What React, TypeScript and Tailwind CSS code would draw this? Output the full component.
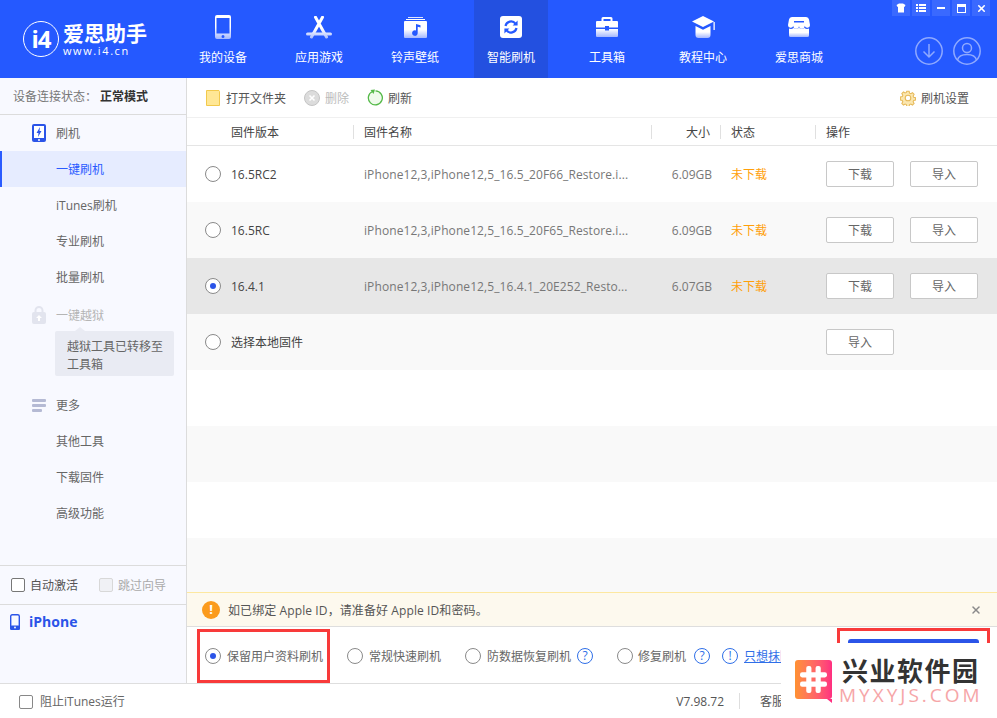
import React from 'react';
import { X } from 'lucide-react';

const FONT = 'font-["Open_Sans","Noto_Sans_CJK_SC",sans-serif]';

function Grad({ id }: { id: string }) {
  return (
    <defs>
      <linearGradient id={id} x1="0" y1="0" x2="0" y2="1">
        <stop offset="0%" stopColor="#ffffff" />
        <stop offset="50%" stopColor="#ffffff" />
        <stop offset="100%" stopColor="#a4b8ff" />
      </linearGradient>
    </defs>
  );
}

const PhoneIcon = () => (
  <svg width="16" height="24" viewBox="0 0 16 24">
    <Grad id="g-phone" />
    <path fillRule="evenodd" fill="url(#g-phone)" d="M2 0h12a2 2 0 0 1 2 2v20a2 2 0 0 1-2 2H2a2 2 0 0 1-2-2V2a2 2 0 0 1 2-2zM1.500 3v15.500h13V3zM8 20a1.500 1.500 0 1 0 0 3 1.500 1.500 0 0 0 0-3z" />
  </svg>
);

const AppIcon = () => (
  <svg width="26" height="23" viewBox="0 0 26 23">
    <defs>
      <linearGradient id="g-app" gradientUnits="userSpaceOnUse" x1="0" y1="0" x2="0" y2="23">
        <stop offset="0%" stopColor="#ffffff" />
        <stop offset="55%" stopColor="#ffffff" />
        <stop offset="100%" stopColor="#a4b8ff" />
      </linearGradient>
    </defs>
    <path d="M9.500 1.200L20.500 21M16.500 1.200L5.500 21" fill="none" stroke="url(#g-app)" strokeWidth="3" strokeLinecap="round" />
    <rect x="0" y="16.500" width="26" height="3" rx="1.500" fill="url(#g-app)" />
  </svg>
);

const MusicIcon = () => (
  <svg width="23" height="21" viewBox="0 0 23 21">
    <Grad id="g-music" />
    <rect x="4" y="0" width="15" height="1" fill="#dfe6ff" />
    <rect x="2" y="2" width="19" height="1" fill="#ffffff" />
    <path fill="url(#g-music)" fillRule="evenodd" d="M1 4h21a1 1 0 0 1 1 1v15a1 1 0 0 1-1 1H1a1 1 0 0 1-1-1V5a1 1 0 0 1 1-1zM12 7v6.500a2.800 2.800 0 1 0 1.700 2.500V9.800l2.800.7V8.200z" />
  </svg>
);

const FlashIcon = () => (
  <svg width="22" height="22" viewBox="0 0 22 22">
    <rect width="22" height="22" rx="3" fill="#ffffff" />
    <path d="M5.500 10a5.700 5.700 0 0 1 10-2.400M16.500 12a5.700 5.700 0 0 1-10 2.400" fill="none" stroke="#2559ff" strokeWidth="2.200" />
    <path d="M17.600 4.600v5h-5zM4.400 17.400v-5h5z" fill="#2559ff" />
  </svg>
);

const ToolboxIcon = () => (
  <svg width="22" height="20" viewBox="0 0 22 20">
    <Grad id="g-tool" />
    <path fill="#ffffff" d="M7 0h8a1.500 1.500 0 0 1 1.500 1.500V4h-2V2h-7v2h-2V1.500A1.500 1.500 0 0 1 7 0z" />
    <path fill="url(#g-tool)" d="M1 4h20a1 1 0 0 1 1 1v5.500h-9V9H9v1.500H0V5a1 1 0 0 1 1-1zM0 12h9v1.500h4V12h9v7a1 1 0 0 1-1 1H1a1 1 0 0 1-1-1z" />
  </svg>
);

const CapIcon = () => (
  <svg width="23" height="22" viewBox="0 0 23 22">
    <Grad id="g-cap" />
    <path fill="#ffffff" d="M11 0L0 5.500 11 11l11-5.500z" />
    <path fill="url(#g-cap)" d="M3.500 10L11 13.800 18.500 10v9a3 3 0 0 1-3 3h-9a3 3 0 0 1-3-3z" />
    <rect x="21.400" y="6" width="1.500" height="8" fill="#dfe6ff" />
  </svg>
);

const StoreIcon = () => (
  <svg width="22" height="20" viewBox="0 0 22 20">
    <Grad id="g-store" />
    <path fill="#ffffff" fillRule="evenodd" d="M4 0h14a3 3 0 0 1 3 2.500L22 8a2.700 2.700 0 0 1-5.300.8 2.800 2.800 0 0 1-5.700 0 2.800 2.800 0 0 1-5.700 0A2.700 2.700 0 0 1 0 8l1-5.500A3 3 0 0 1 4 0zM6 4v1.500h10V4z" />
    <path fill="url(#g-store)" d="M1 11.500c1.700.7 3.200.5 4.500-.5 1.500 1.100 3.500 1.100 5.500 0 2 1.100 4 1.100 5.500 0 1.300 1 2.800 1.200 4.500.5V18.500a1.500 1.500 0 0 1-1.500 1.500h-17A1.500 1.500 0 0 1 1 18.500z" />
  </svg>
);

const navItems = [
  { label: '我的设备', icon: <PhoneIcon /> },
  { label: '应用游戏', icon: <AppIcon /> },
  { label: '铃声壁纸', icon: <MusicIcon /> },
  { label: '智能刷机', icon: <FlashIcon />, active: true },
  { label: '工具箱', icon: <ToolboxIcon /> },
  { label: '教程中心', icon: <CapIcon /> },
  { label: '爱思商城', icon: <StoreIcon /> },
];

function WindowControls() {
  return (
    <div className="absolute right-[7px] top-0 flex gap-[2px]">
      <div className="flex h-[16px] w-[18px] items-center justify-center bg-[#3a69ff]">
        <svg width="10" height="10" viewBox="0 0 10 10"><path fill="#fff" d="M3 .5h4L9.500 2 8.500 4 8 3.800V9.500H2V3.800L1.500 4 .5 2z" /></svg>
      </div>
      <div className="flex h-[16px] w-[18px] items-center justify-center bg-[#3a69ff]">
        <svg width="10" height="10" viewBox="0 0 10 10"><path fill="#fff" d="M0 1h2v2H0zM3 1h7v2H3zM0 4h2v2H0zM3 4h7v2H3zM0 7h2v2H0zM3 7h7v2H3z" /></svg>
      </div>
      <div className="flex h-[16px] w-[18px] items-center justify-center bg-[#3a69ff]">
        <div className="h-[2px] w-[8px] bg-white" />
      </div>
      <div className="flex h-[16px] w-[18px] items-center justify-center bg-[#3a69ff]">
        <div className="h-[9px] w-[9px] border border-t-[3px] border-white" />
      </div>
      <div className="flex h-[16px] w-[18px] items-center justify-center bg-[#3a69ff]">
        <X size={11} color="#fff" strokeWidth={3.5} />
      </div>
    </div>
  );
}

function Header() {
  return (
    <div className="relative flex h-[78px] shrink-0 bg-[#2559ff] text-white">
      <div className="flex w-[175px] shrink-0 items-center pl-[23px]">
        <div className="flex h-[36px] w-[36px] items-center justify-center rounded-full border-[1.5px] border-white">
          <span className="text-[24px] leading-none font-bold tracking-[-1px]">i4</span>
        </div>
        <div className="ml-[4px] flex flex-col">
          <span className="text-[21px] leading-[24px] font-bold">爱思助手</span>
          <span className="text-[11px] leading-[12px] tracking-[1.600px]">www.i4.cn</span>
        </div>
      </div>
      {navItems.map((n) => (
        <div key={n.label} className="flex w-[96px] shrink-0 justify-center">
          <div className={`flex h-[78px] w-[74px] flex-col items-center ${n.active ? 'bg-[#2350e0]' : ''}`}>
            <div className="mt-[14px] flex h-[26px] items-center justify-center">{n.icon}</div>
            <span className="mt-[9px] text-[12px] leading-[18px]">{n.label}</span>
          </div>
        </div>
      ))}
      <div className="ml-auto mr-[16px] mt-[37px] flex h-[28px] gap-[10px]">
        <svg width="28" height="28" viewBox="0 0 28 28" fill="none" stroke="#8fa9ff" strokeWidth="1.500">
          <circle cx="14" cy="14" r="13.200" />
          <path d="M14 7v13M8.500 14.500L14 20l5.500-5.500" />
        </svg>
        <svg width="28" height="28" viewBox="0 0 28 28" fill="none" stroke="#8fa9ff" strokeWidth="1.500">
          <circle cx="14" cy="14" r="13.200" />
          <circle cx="14" cy="11" r="4.500" />
          <path d="M4.500 23c1-4 5-5.500 9.500-5.500s8.500 1.500 9.500 5.500" />
        </svg>
      </div>
      <WindowControls />
    </div>
  );
}

function SideItem({ label, active }: { label: string; active?: boolean }) {
  return (
    <div className={`flex h-[36px] items-center pt-[2px] text-[12px] ${active ? 'border-l-2 border-[#2a5bff] bg-[#e6ecff] pl-[54px] text-[#2a5bff]' : 'pl-[56px] text-[#666666]'}`}>
      {label}
    </div>
  );
}

function SideHead({ label, icon, muted }: { label: string; icon: React.ReactNode; muted?: boolean }) {
  return (
    <div className={`flex h-[36px] items-center text-[12px] ${muted ? 'text-[#b5b5b5]' : 'text-[#666666]'}`}>
      <div className="flex w-[56px] pl-[32px]">{icon}</div>
      <span className="pt-[2px]">{label}</span>
    </div>
  );
}

function Sidebar() {
  return (
    <div className="flex w-[187px] shrink-0 flex-col border-r border-[#dcdcdc] bg-[#f8f9ff]">
      <div className="flex h-[37px] shrink-0 items-center border-b border-[#dcdcdc] pl-[13px] pt-[2px] text-[12px] text-[#777777]">
        {'设备连接状态\uFF1A'}
        <span className="ml-[3px] font-bold text-[#333333]">正常模式</span>
      </div>
      <SideHead
        label="刷机"
        icon={
          <svg width="14" height="18" viewBox="0 0 14 18">
            <rect width="14" height="18" rx="2" fill="#2b54e8" />
            <rect x="2" y="2" width="10" height="12" fill="#ffffff" />
            <path d="M8 3L4.500 9h2L6 13l3.500-6h-2z" fill="#2b54e8" />
            <circle cx="7" cy="16" r="1" fill="#ffffff" />
          </svg>
        }
      />
      <SideItem label="一键刷机" active />
      <SideItem label="iTunes刷机" />
      <SideItem label="专业刷机" />
      <SideItem label="批量刷机" />
      <div className="mt-[2px]">
        <SideHead
          muted
          label="一键越狱"
          icon={
            <svg width="14" height="18" viewBox="0 0 14 18">
              <path d="M3.500 7V4.500a3.500 3.500 0 0 1 7 0V7" fill="none" stroke="#e2e4ee" strokeWidth="2" />
              <rect y="6" width="14" height="12" rx="2" fill="#e2e4ee" />
              <path d="M7 9l3 3H8v3H6v-3H4z" fill="#ffffff" />
            </svg>
          }
        />
      </div>
      <div className="relative -mt-[2px] ml-[55px] h-[45px] w-[119px] rounded-[2px] bg-[#e9ebf3] pl-[12px] pr-[8px] pt-[7px] text-[12px] leading-[18px] text-[#666666]">
        <div className="absolute -top-[4px] left-[20px] h-0 w-0 border-x-[5px] border-b-[4px] border-x-transparent border-b-[#e9ebf3]" />
        越狱工具已转移至工具箱
      </div>
      <div className="mt-[11px]">
        <SideHead
          label="更多"
          icon={
            <svg width="14" height="13" viewBox="0 0 14 13" fill="#b5bad4">
              <rect width="14" height="3" rx="1" />
              <rect y="5" width="14" height="3" rx="1" />
              <rect y="10" width="10" height="3" rx="1" />
            </svg>
          }
        />
      </div>
      <SideItem label="其他工具" />
      <SideItem label="下载固件" />
      <SideItem label="高级功能" />
      <div className="flex-1" />
      <div className="flex h-[40px] shrink-0 items-center border-y border-[#dcdcdc] pl-[11px] text-[12px]">
        <div className="h-[14px] w-[14px] rounded-[2px] border border-[#777777] bg-white" />
        <span className="ml-[5px] pt-[2px] text-[#555555]">自动激活</span>
        <div className="ml-[21px] h-[14px] w-[14px] rounded-[2px] border border-[#d8d8d8] bg-[#f0f1f5]" />
        <span className="ml-[5px] pt-[2px] text-[#aaaaaa]">跳过向导</span>
      </div>
      <div className="flex h-[78px] shrink-0 items-start pl-[10px] pt-[8px]">
        <svg width="10" height="16" viewBox="0 0 10 16" className="mt-[1px]">
          <rect x="0.700" y="0.700" width="8.600" height="14.600" rx="1.500" fill="none" stroke="#2b54e8" strokeWidth="1.400" />
          <rect y="11.500" width="10" height="4.500" rx="1.500" fill="#2b54e8" />
          <circle cx="5" cy="13.500" r="0.900" fill="#ffffff" />
        </svg>
        <span className="ml-[9px] text-[14px] leading-[18px] font-bold text-[#2b54e8]">iPhone</span>
      </div>
    </div>
  );
}

const firmwares = [
  { version: '16.5RC2', name: 'iPhone12,3,iPhone12,5_16.5_20F66_Restore.i...', size: '6.09GB', bg: 'bg-white' },
  { version: '16.5RC', name: 'iPhone12,3,iPhone12,5_16.5_20F65_Restore.i...', size: '6.09GB', bg: 'bg-[#f9f9f9]' },
  { version: '16.4.1', name: 'iPhone12,3,iPhone12,5_16.4.1_20E252_Resto...', size: '6.07GB', bg: 'bg-[#e7e7e7]', checked: true },
];

function Radio({ checked }: { checked?: boolean }) {
  return (
    <div className="flex h-[16px] w-[16px] shrink-0 items-center justify-center rounded-full border border-[#8a8a8a] bg-white">
      {checked && <div className="h-[6px] w-[6px] rounded-full bg-[#2b54e8]" />}
    </div>
  );
}

function OutlineBtn({ label }: { label: string }) {
  return (
    <div className="flex h-[26px] w-[68px] items-center justify-center rounded-[2px] border border-[#c8c8c8] bg-white pt-[2px] text-[12px] text-[#666666]">
      {label}
    </div>
  );
}

function HeadCell({ className, label }: { className: string; label: string }) {
  return <div className={`pt-[2px] text-[12px] text-[#444444] ${className}`}>{label}</div>;
}

function Toolbar() {
  return (
    <div className="flex h-[40px] shrink-0 items-center border-b border-[#f0f0f0] text-[12px] text-[#555555]">
      <svg width="14" height="16" viewBox="0 0 14 16" className="ml-[19px]">
        <path d="M.5.5h12.500l.500 1v14H.5z" fill="#ffe795" stroke="#f2c94c" />
      </svg>
      <span className="ml-[6px] pt-[2px]">打开文件夹</span>
      <svg width="16" height="16" viewBox="0 0 16 16" className="ml-[18px]">
        <circle cx="8" cy="8" r="7.500" fill="#dcdcdc" stroke="#c4c4c4" />
        <path d="M5.500 5.500l5 5M10.500 5.500l-5 5" stroke="#ffffff" strokeWidth="1.600" />
      </svg>
      <span className="ml-[5px] pt-[2px] text-[#bbbbbb]">删除</span>
      <svg width="17" height="17" viewBox="0 0 17 17" className="ml-[18px]">
        <path d="M5.500 2.500a7 7 0 1 0 3-.6" fill="#effbec" stroke="#54b948" strokeWidth="1.300" />
        <path d="M3.500 1L8 .5 6.500 5z" fill="#54b948" />
      </svg>
      <span className="ml-[4px] pt-[2px]">刷新</span>
      <div className="ml-auto mr-[28px] flex items-center">
        <svg width="16" height="16" viewBox="0 0 16 16" fill="#fbe7b0" stroke="#e6b95a" strokeWidth="1.100">
          <path d="M6.700 .8h2.600l.4 2 1.400.6 1.800-1.100 1.800 1.800-1.100 1.800.6 1.400 2 .4v2.600l-2 .4-.6 1.400 1.100 1.800-1.800 1.800-1.800-1.100-1.400.6-.4 2H6.700l-.4-2-1.400-.6-1.800 1.100-1.800-1.800 1.100-1.800-.6-1.400-2-.4V6.900l2-.4.6-1.400L1.300 3.300l1.800-1.800 1.800 1.100 1.400-.6z" transform="translate(.6 .6) scale(.92)" />
          <circle cx="8" cy="8" r="2.800" fill="#ffffff" />
        </svg>
        <span className="ml-[5px] pt-[2px]">刷机设置</span>
      </div>
    </div>
  );
}

function Table() {
  return (
    <div className="flex flex-1 flex-col">
      <div className="flex h-[28px] shrink-0 items-center border-b border-[#e5e5e5]">
        <HeadCell className="w-[166px] pl-[44px]" label="固件版本" />
        <div className="h-[14px] w-px bg-[#e0e0e0]" />
        <HeadCell className="w-[297px] pl-[10px]" label="固件名称" />
        <div className="h-[14px] w-px bg-[#e0e0e0]" />
        <HeadCell className="w-[68px] pr-[10px] text-right" label="大小" />
        <div className="h-[14px] w-px bg-[#e0e0e0]" />
        <HeadCell className="w-[94px] pl-[10px]" label="状态" />
        <div className="h-[14px] w-px bg-[#e0e0e0]" />
        <HeadCell className="pl-[10px]" label="操作" />
      </div>
      {firmwares.map((f) => (
        <div key={f.version} className={`flex h-[56px] shrink-0 items-center text-[12px] ${f.bg}`}>
          <div className="flex w-[44px] justify-end pr-[10px]"><Radio checked={f.checked} /></div>
          <div className="w-[133px] pt-[2px] text-[#444444]">{f.version}</div>
          <div className="w-[275px] whitespace-nowrap pt-[2px] tracking-[0.09px] text-[#777777]">{f.name}</div>
          <div className="w-[73px] pt-[2px] text-right text-[#777777]">{f.size}</div>
          <div className="ml-[19px] w-[95px] pt-[2px] text-[#ff9f0a]">未下载</div>
          <OutlineBtn label="下载" />
          <div className="ml-[16px]"><OutlineBtn label="导入" /></div>
        </div>
      ))}
      <div className="flex h-[56px] shrink-0 items-center bg-[#f9f9f9] text-[12px]">
        <div className="flex w-[44px] justify-end pr-[10px]"><Radio /></div>
        <div className="w-[595px] pt-[2px] text-[#444444]">选择本地固件</div>
        <OutlineBtn label="导入" />
      </div>
      <div className="h-[56px] shrink-0" />
      <div className="h-[56px] shrink-0 bg-[#f9f9f9]" />
      <div className="h-[56px] shrink-0" />
      <div className="flex-1 bg-[#f9f9f9]" />
    </div>
  );
}

function Notice() {
  return (
    <div className="flex h-[35px] shrink-0 items-center border-y border-[#dedede] border-t-[#fde8a0] bg-[#fdf9ee] text-[12px] text-[#555555]">
      <div className="ml-[15px] flex h-[18px] w-[18px] items-center justify-center rounded-full bg-[#fb9b1d] text-[13px] font-bold text-white">!</div>
      <span className="ml-[8px] pt-[2px] tracking-[0.1px]">{'如已绑定 Apple ID\uFF0C请准备好 Apple ID和密码。'}</span>
      <X size={12} color="#8a8a8a" strokeWidth={3} className="ml-auto mr-[15px]" />
    </div>
  );
}

function HelpIcon({ mark }: { mark: string }) {
  return (
    <div className="flex h-[16px] w-[16px] shrink-0 items-center justify-center rounded-full border-[1.5px] border-[#2f6fe8] text-[12px] leading-none text-[#2f6fe8]">
      {mark}
    </div>
  );
}

function Options() {
  return (
    <div className="flex h-[56px] shrink-0 items-start pl-[10px] text-[12px] text-[#666666]">
      <div className="mt-[2px] flex h-[54px] w-[133px] items-center border-[3px] border-[#f83a3a] pl-[5px]">
        <Radio checked />
        <span className="ml-[6px] whitespace-nowrap pt-[2px]">保留用户资料刷机</span>
      </div>
      <div className="mt-[2px] ml-[17px] flex h-[54px] items-center">
        <Radio />
        <span className="ml-[6px] pt-[2px]">常规快速刷机</span>
        <div className="ml-[24px]"><Radio /></div>
        <span className="ml-[6px] pt-[2px]">防数据恢复刷机</span>
        <div className="ml-[6px]"><HelpIcon mark="?" /></div>
        <div className="ml-[24px]"><Radio /></div>
        <span className="ml-[5px] pt-[2px]">修复刷机</span>
        <div className="ml-[8px]"><HelpIcon mark="?" /></div>
        <div className="ml-[12px]"><HelpIcon mark="!" /></div>
        <span className="ml-[6px] whitespace-nowrap pt-[2px] text-[#2f6fe8] underline">只想抹除</span>
      </div>
      <div className="ml-auto mr-[7px] mt-[1px] h-[55px] w-[153px] border-x-[3px] border-t-[3px] border-[#f83a3a] px-[8px] pt-[8px]">
        <div className="h-[40px] rounded-[3px] bg-[#2b54e8]" />
      </div>
    </div>
  );
}

function Footer() {
  return (
    <div className="flex h-[34px] shrink-0 items-center bg-white text-[12px] text-[#666666]">
      <div className="ml-[19px] mt-[1px] h-[14px] w-[14px] rounded-[2px] border border-[#888888]" />
      <span className="ml-[7px] pt-[2px]">阻止iTunes运行</span>
      <span className="ml-auto pt-[2px] text-[#555555]">V7.98.72</span>
      <div className="ml-[15px] h-[16px] w-px bg-[#dedede]" />
      <span className="ml-[20px] w-[237px] pt-[2px] text-[#555555]">客服</span>
    </div>
  );
}

function Watermark() {
  return (
    <div className="absolute bottom-0 right-0 flex h-[75px] w-[216px] bg-white pl-[14px] pt-[17px]">
      <div className="relative flex h-[39px] w-[37px] items-center justify-center rounded-[3px] bg-gradient-to-r from-[#ff9130] to-[#ff2e80]">
        <svg width="29" height="29" viewBox="0 0 28 28" fill="#ffffff">
          <rect x="7" y="1" width="5" height="26" rx="2" />
          <rect x="16" y="1" width="5" height="26" rx="2" />
          <rect x="1" y="7" width="26" height="5" rx="2" />
          <rect x="1" y="16" width="26" height="5" rx="2" />
        </svg>
        <div className="absolute -bottom-[4px] right-0 h-0 w-0 border-l-[5px] border-t-[4px] border-l-transparent border-t-[#ff2e80]" />
      </div>
      <div className="ml-[7px] flex flex-col">
        <span className="ml-[3px] -mt-[3px] text-[26px] leading-[28px] font-bold tracking-[1.500px] whitespace-nowrap text-[#333333]">兴业软件园</span>
        <span className="mt-[1px] text-[19px] leading-[18px] tracking-[3px] whitespace-nowrap text-[#f6a6a8]">MYXYJS.COM</span>
      </div>
    </div>
  );
}

export default function App() {
  return (
    <div className={`relative flex h-[718px] w-[997px] flex-col overflow-hidden bg-white ${FONT}`}>
      <Header />
      <div className="flex min-h-0 flex-1">
        <Sidebar />
        <div className="flex min-w-0 flex-1 flex-col">
          <Toolbar />
          <Table />
          <Notice />
          <Options />
        </div>
      </div>
      <div className="border-t border-[#dedede]"><Footer /></div>
      <Watermark />
    </div>
  );
}
